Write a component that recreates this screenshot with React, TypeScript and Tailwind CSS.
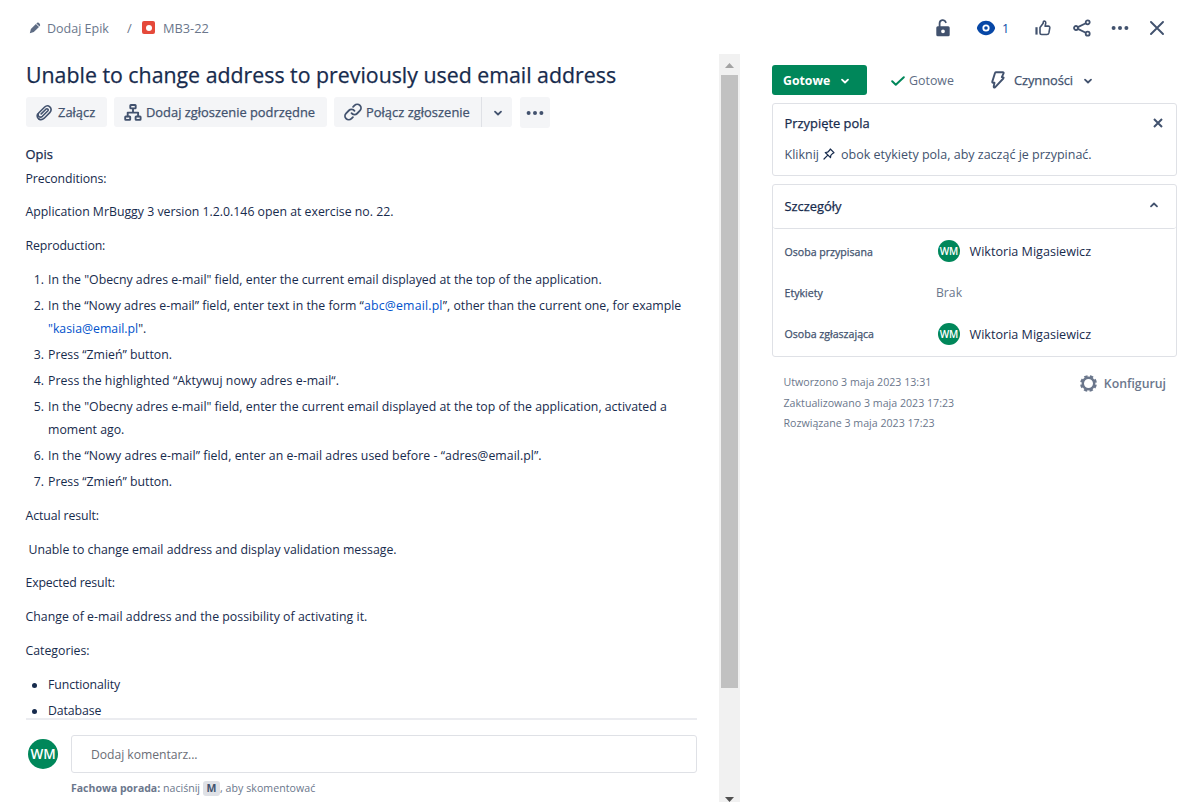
import type { ReactNode } from 'react';

type IconProps = { className?: string; children?: ReactNode; box?: string };

function Icon({ className = '', children, box = '0 0 24 24' }: IconProps) {
  return (
    <svg viewBox={box} className={`shrink-0 ${className}`} fill="none" stroke="currentColor" strokeWidth="2" strokeLinecap="round" strokeLinejoin="round">
      {children}
    </svg>
  );
}

const ChevronDown = ({ className = '' }: { className?: string }) => (
  <Icon box="0 0 10 10" className={`h-[10px] w-[10px] ${className}`}>
    <path d="M2 3.6 5 6.5 8 3.6" strokeWidth="1.8" />
  </Icon>
);

const Dots = ({ className = '' }: { className?: string }) => (
  <svg viewBox="0 0 18 6" className={`h-[6px] w-[18px] shrink-0 ${className}`} fill="currentColor">
    <circle cx="2.6" cy="3" r="2" />
    <circle cx="9" cy="3" r="2" />
    <circle cx="15.4" cy="3" r="2" />
  </svg>
);

function Avatar({ className = '' }: { className?: string }) {
  return (
    <span className={`flex shrink-0 items-center justify-center rounded-full bg-[#00875A] font-semibold text-white ${className}`}>WM</span>
  );
}

function Header() {
  return (
    <header className="flex h-[54px] shrink-0 items-center pl-[29px] pr-[26px] text-[12.5px] text-[#6B778C]">
      <svg viewBox="0 0 12 12" className="mt-[2px] h-[12px] w-[12px]" fill="#5E6C84">
        <path d="M6.9 1.9 10 5 4.8 10 0.8 11.3 1.9 7Z" />
        <path d="M7.4 1.4q1.1-1.2 2.300-.6l1.200 1.200q.8 1.200-.4 2.500Z" />
      </svg>
      <span className="ml-[6px] mt-[4px] w-[80px]">Dodaj Epik</span>
      <span className="mt-[3px] w-[15px] text-[13px]">/</span>
      <span className="mt-[1px] flex h-[13px] w-[13px] items-center justify-center rounded-[2px] bg-[#E5493A]">
        <span className="h-[6px] w-[6px] rounded-full bg-white" />
      </span>
      <span className="ml-[8px] mt-[4px] text-[12.8px]">MB3-22</span>
      <div className="ml-auto mt-[2px] flex items-center text-[#42526E]">
        <svg viewBox="0 0 14 18" className="h-[18px] w-[14px]">
          <path d="M3.6 8V4.3a3.2 3.2 0 0 1 6.2-1.1" fill="none" stroke="currentColor" strokeWidth="1.8" strokeLinecap="round" />
          <path fillRule="evenodd" fill="currentColor" d="M1.8 7.3h10.4q1.5 0 1.5 1.5v7q0 1.5-1.5 1.5H1.8q-1.5 0-1.5-1.5v-7q0-1.5 1.5-1.5ZM7 10.4a1.9 1.9 0 1 0 0 3.8 1.9 1.9 0 0 0 0-3.8Z" />
        </svg>
        <svg viewBox="0 0 20 16" className="ml-[26px] h-[16px] w-[20px] text-[#0747A6]">
          <path fill="currentColor" d="M10 .7C5 .7 1.8 4.4 1 7.4q-.1.6 0 1.2c.8 3 4 6.7 9 6.7s8.2-3.7 9-6.7q.1-.6 0-1.2C18.2 4.4 15 .7 10 .7Z" />
          <circle cx="10" cy="8" r="2.7" fill="none" stroke="#fff" strokeWidth="1.8" />
        </svg>
        <span className="ml-[6px] mt-[2px] w-[8px] text-[12.5px] text-[#0747A6]">1</span>
        <svg viewBox="0 0 16 16" className="ml-[25px] h-[16px] w-[16px]" fill="none" stroke="currentColor" strokeWidth="1.6" strokeLinejoin="round">
          <path d="M5 7.5 8.2 3.2V2.2Q8.3 1 9.3 1q1.5.2 1.5 1.9L10.1 6.1H13.3q1.7.2 1.5 1.8l-.9 5q-.4 1.6-1.9 1.6H6.6Q5 14.4 5 13Z" />
          <path d="M1.5 7.2V14.6" strokeWidth="2.2" />
        </svg>
        <svg viewBox="0 0 18 18" className="ml-[22px] h-[18px] w-[18px]" fill="none" stroke="currentColor" strokeWidth="1.8">
          <circle cx="3" cy="9" r="2" />
          <circle cx="14.7" cy="3.3" r="2" />
          <circle cx="14.7" cy="14.7" r="2" />
          <path d="M4.9 8.1 12.8 4.2M4.9 9.9l7.9 3.9" />
        </svg>
        <Dots className="ml-[20px]" />
        <svg viewBox="0 0 14 14" className="ml-[21px] mr-px h-[14px] w-[14px]" fill="none" stroke="currentColor" strokeWidth="1.9" strokeLinecap="round">
          <path d="M1 1 13 13M13 1 1 13" />
        </svg>
      </div>
    </header>
  );
}

const stroke = '[-webkit-text-stroke:0.25px_currentColor]';

function Toolbar() {
  return (
    <div className="mt-[5px] flex h-[31px] items-start text-[12.9px] text-[#42526E]">
      <button className={`flex h-[30px] w-[81px] items-center rounded-[3px] bg-[#F4F5F7] pl-[10px] ${stroke}`}>
        <Icon className="h-[17px] w-[17px]" box="0 0 17 17">
          <path d="M5.2 9.9 9.9 5.2Q10.9 4.3 11.8 5.1T11.7 7L6.4 12.3Q4.5 13.9 2.9 12.5T2.9 8.8L8.7 3Q11.3.6 13.8 2.8T14 8.4L8.2 14.2Q5.8 16.4 3.2 15.2" strokeWidth="1.6" />
          <path d="M3 15.1Q.3 13 1.6 10" strokeWidth="1.6" />
        </Icon>
        <span className="ml-[5px] mt-[2px]">Załącz</span>
      </button>
      <button className={`ml-[7px] flex h-[30px] w-[213px] items-center whitespace-nowrap rounded-[3px] bg-[#F4F5F7] pl-[10px] ${stroke}`}>
        <Icon className="h-[17px] w-[18px]" box="0 0 18 17">
          <g strokeWidth="1.9">
            <rect x="6.3" y="1" width="5.4" height="3.4" rx=".6" />
            <rect x="1.2" y="12.5" width="5" height="3.4" rx=".6" />
            <rect x="11.6" y="12.5" width="5" height="3.4" rx=".6" />
            <path d="M9 4.6V8.5M3.7 12.2V8.6H14.1V12.2" />
          </g>
        </Icon>
        <span className="ml-[4px] mt-[2px]">Dodaj zgłoszenie podrzędne</span>
      </button>
      <button className={`ml-[7px] flex h-[30px] w-[147px] items-center whitespace-nowrap rounded-l-[3px] bg-[#F4F5F7] pl-[10px] ${stroke}`}>
        <Icon className="h-[18px] w-[18px]">
          <path d="M10 13.5a5 5 0 0 0 7.5.5l3.7-3.700a5 5 0 0 0-7.100-7.100l-2 2M14 10.500a5 5 0 0 0-7.500-.5L2.800 13.700a5 5 0 0 0 7.100 7.100l2-2" strokeWidth="2.4" />
        </Icon>
        <span className="ml-[4px] mt-[2px] tracking-[0.03px]">Połącz zgłoszenie</span>
      </button>
      <button className="ml-px flex h-[30px] w-[30px] items-center justify-center rounded-r-[3px] bg-[#F4F5F7] shadow-[-1px_0_0_#DFE1E6]">
        <ChevronDown className="ml-px mt-px" />
      </button>
      <button className="ml-[8px] flex h-[31px] w-[30px] items-center justify-center rounded-[3px] bg-[#F4F5F7]">
        <Dots className="mt-px" />
      </button>
    </div>
  );
}

const steps: ReactNode[] = [
  'In the "Obecny adres e-mail" field, enter the current email displayed at the top of the application.',
  <>In the “Nowy adres e-mail” field, enter text in the form <span className="tracking-[0.18px]">“<a className="text-[#0052CC]">abc@email.pl</a>”</span><span className="tracking-[-0.02px]">, other than the current one, for example</span><br /><a className="text-[#0052CC]">"kasia@email.pl</a>".</>,
  'Press “Zmień” button.',
  <span className="tracking-[0.06px]">Press the highlighted “Aktywuj nowy adres e-mail“.</span>,
  <>In the "Obecny adres e-mail" field, enter the current email displayed at the top of the application, activated a<br />moment ago.</>,
  <span className="tracking-[0.04px]">In the “Nowy adres e-mail” field, enter an e-mail adres used before - “adres@email.pl”.</span>,
  'Press “Zmień” button.',
];

function Description() {
  return (
    <div className="-ml-[0.5px] mt-[16px] whitespace-nowrap text-[12.3px] leading-[22.85px] text-[#172B4D]">
      <h2 className={`h-[23.6px] text-[12.9px] leading-[20px] ${stroke}`}>Opis</h2>
      <div className="flex flex-col gap-[11px]">
        <p className="tracking-[-0.1px]">Preconditions:</p>
        <p>Application MrBuggy 3 version 1.2.0.146 open at exercise no. 22.</p>
        <p className="tracking-[-0.1px]">Reproduction:</p>
        <ol className="flex flex-col gap-[3.17px]">
          {steps.map((step, i) => (
            <li key={i} className="flex">
              <span className="w-[18.5px] text-right">{i + 1}.</span>
              <div className="ml-[4px]">{step}</div>
            </li>
          ))}
        </ol>
        <p className="tracking-[-0.1px]">Actual result:</p>
        <p className="pl-[3px]">Unable to change email address and display validation message.</p>
        <p className="tracking-[-0.15px]">Expected result:</p>
        <p className="tracking-[0.04px]">Change of e-mail address and the possibility of activating it.</p>
        <p>Categories:</p>
        <ul className="flex flex-col gap-[3.17px]">
          {['Functionality', 'Database'].map((c) => (
            <li key={c} className="flex items-center tracking-[-0.1px]">
              <span className="ml-[6.5px] mr-[11px] h-[5px] w-[5px] rounded-full bg-[#172B4D]" />
              {c}
            </li>
          ))}
        </ul>
      </div>
    </div>
  );
}

function Comment() {
  return (
    <div className="flex w-[671px] border-t-2 border-[#EBECF0] pl-[2px] pt-[15px]">
      <Avatar className="mt-[4px] h-[30px] w-[30px] text-[13.5px]" />
      <div className="ml-[13px] flex-1">
        <div className="flex h-[38px] items-center rounded-[3px] border border-[#DFE1E6] pl-[19px] pt-[2px] text-[12.2px] tracking-[-0.05px] text-[#6B6E76]">Dodaj komentarz...</div>
        <div className="mt-[7px] flex h-[16px] items-center whitespace-nowrap text-[10.6px] text-[#6B778C]">
          <span className="mt-[2px] w-[92px] text-[10.5px] font-bold">Fachowa porada:</span>
          <span className="mt-[2px] w-[40px]">naciśnij</span>
          <kbd className="flex h-[15px] w-[17px] items-center justify-center rounded-[3px] bg-[#DFE1E6] pt-px font-['Open_Sans'] text-[10.5px] font-bold text-[#42526E]">M</kbd>
          <span className="mt-[2px] tracking-[0.05px]">, aby skomentować</span>
        </div>
      </div>
    </div>
  );
}

function Scrollbar() {
  return (
    <div className="flex w-[21px] shrink-0 flex-col items-center bg-[#F1F1F1]">
      <svg viewBox="0 0 9 5" className="mt-[9px] h-[5px] w-[9px]" fill="#A3A3A3"><path d="M0 5 4.5 0 9 5Z" /></svg>
      <div className="mt-[7px] h-[613px] w-[17px] bg-[#C1C1C1]" />
      <svg viewBox="0 0 9 5" className="mt-auto h-[5px] w-[9px]" fill="#505050"><path d="M0 0H9L4.5 5Z" /></svg>
    </div>
  );
}

function Field({ label, children }: { label: string; children: ReactNode }) {
  return (
    <div className="flex h-[41px] items-center">
      <span className={`w-[151.5px] pt-[2px] text-[10.6px] text-[#42526E] ${stroke}`}>{label}</span>
      {children}
    </div>
  );
}

const Person = ({ className }: { className: string }) => (
  <div className={`flex items-center pl-[2px] ${className}`}>
    <Avatar className="h-[22px] w-[22px] text-[10px]" />
    <span className="ml-[9.5px] mt-[2px] whitespace-nowrap text-[12.6px] text-[#172B4D]">Wiktoria Migasiewicz</span>
  </div>
);

function Sidebar() {
  return (
    <aside className="ml-[32px] w-[405px] shrink-0 whitespace-nowrap">
      <div className="mt-[11px] flex h-[30px] items-center">
        <button className="flex h-[30px] w-[95px] items-center rounded-[3px] bg-[#00875A] pl-[11px] text-[12.3px] font-bold text-white">
          <span className="mt-[2px]">Gotowe</span>
          <ChevronDown className="ml-[10px] mt-px" />
        </button>
        <Icon box="0 0 14 10" className="ml-[24px] mt-[2px] h-[10px] w-[14px] text-[#00875A]">
          <path d="M1.2 5.2 4.8 8.7 12.8 1.2" />
        </Icon>
        <span className="ml-[4px] mt-[2px] text-[12.4px] text-[#5E6C84]">Gotowe</span>
        <Icon box="0 0 14 18" className="ml-[37px] h-[18px] w-[14px] text-[#42526E]">
          <path d="M5.2 1.2H11.8Q13 1.2 12.6 2.3L10.8 6.1H11.9Q13.2 6.3 12.3 7.5L4 16.3Q2.6 17 2.7 15.5L3.5 11.8H2.1Q1 11.7 1.3 10.6L4 2Q4.3 1.2 5.2 1.2Z" strokeWidth="1.9" />
        </Icon>
        <span className={`ml-[9px] mt-[2px] text-[12.9px] tracking-[-0.07px] text-[#42526E] ${stroke}`}>Czynności</span>
        <ChevronDown className="ml-[10px] mt-px text-[#42526E]" />
      </div>

      <section className="mt-[8px] h-[73px] rounded-[3px] border border-[#DFE1E6] pl-[11.5px] pr-[13px]">
        <div className="flex h-[38px] items-center justify-between">
          <h3 className={`mt-[2px] text-[12.9px] text-[#172B4D] ${stroke}`}>Przypięte pola</h3>
          <Icon box="0 0 10 10" className="mr-[0.5px] h-[10px] w-[10px] text-[#42526E]">
            <path d="M1 1 9 9M9 1 1 9" strokeLinecap="butt" />
          </Icon>
        </div>
        <p className="flex h-[24px] items-center text-[12.5px] text-[#42526E]">
          <span className="mt-[2px] w-[38px]">Kliknij</span>
          <Icon box="0 0 12 12" className="h-[12px] w-[12px] text-[#172B4D]">
            <path d="M7.3 1 11 4.7 9.7 5.4 7.8 7.4 7.5 9.7 2.3 4.5 4.6 4.2 6.6 2.3ZM4.6 7.4 1 11" strokeWidth="1.2" />
          </Icon>
          <span className="ml-[6.5px] mt-[2px]">obok etykiety pola, aby zacząć je przypinać.</span>
        </p>
      </section>

      <section className="mt-[8px] h-[173px] rounded-[3px] border border-[#DFE1E6]">
        <div className="flex h-[44px] items-center justify-between rounded-b-[3px] border-b border-[#DFE1E6] pl-[11.5px] pr-[17px]">
          <h3 className={`text-[12.9px] text-[#172B4D] ${stroke}`}>Szczegóły</h3>
          <ChevronDown className="mb-[3px] rotate-180 text-[#42526E]" />
        </div>
        <div className="pl-[11.5px] pt-[2px]">
          <Field label="Osoba przypisana"><Person className="-mt-px" /></Field>
          <Field label="Etykiety"><span className="mt-[2px] text-[12.2px] text-[#6B778C]">Brak</span></Field>
          <Field label="Osoba zgłaszająca"><Person className="mt-px" /></Field>
        </div>
      </section>

      <div className="mt-[15px] flex justify-between pl-[11.5px] pr-[11px] text-[10.65px] leading-[20.5px] text-[#6B778C]">
        <div>
          <p>Utworzono 3 maja 2023 13:31</p>
          <p>Zaktualizowano 3 maja 2023 17:23</p>
          <p>Rozwiązane 3 maja 2023 17:23</p>
        </div>
        <div className="flex h-[22px] items-center pt-px text-[12.3px] font-semibold">
          <svg viewBox="0 0 17 17" className="mr-[7px] h-[17px] w-[17px]" fill="none" stroke="currentColor">
            <circle cx="8.5" cy="8.5" r="5.7" strokeWidth="2.4" />
            <circle cx="8.5" cy="8.5" r="7.3" strokeWidth="2.2" strokeDasharray="3.4 2.333" strokeDashoffset="-1.17" />
          </svg>
          <span className="mt-px">Konfiguruj</span>
        </div>
      </div>
    </aside>
  );
}

export default function App() {
  return (
    <div className="flex h-[802px] w-[1191px] flex-col overflow-hidden bg-white font-['Open_Sans','Noto_Sans',sans-serif]">
      <Header />
      <div className="flex min-h-0 flex-1">
        <main className="flex w-[719px] shrink-0 flex-col pl-[26px]">
          <div className="-ml-px h-[664px] shrink-0 overflow-hidden pl-px">
            <h1 className="mt-[5px] h-[33px] whitespace-nowrap text-[21.3px] leading-[32px] tracking-[0.01px] text-[#172B4D] [-webkit-text-stroke:0.25px_currentColor]">
              Unable to change address to previously used email address
            </h1>
            <Toolbar />
            <Description />
          </div>
          <Comment />
        </main>
        <Scrollbar />
        <Sidebar />
      </div>
    </div>
  );
}
